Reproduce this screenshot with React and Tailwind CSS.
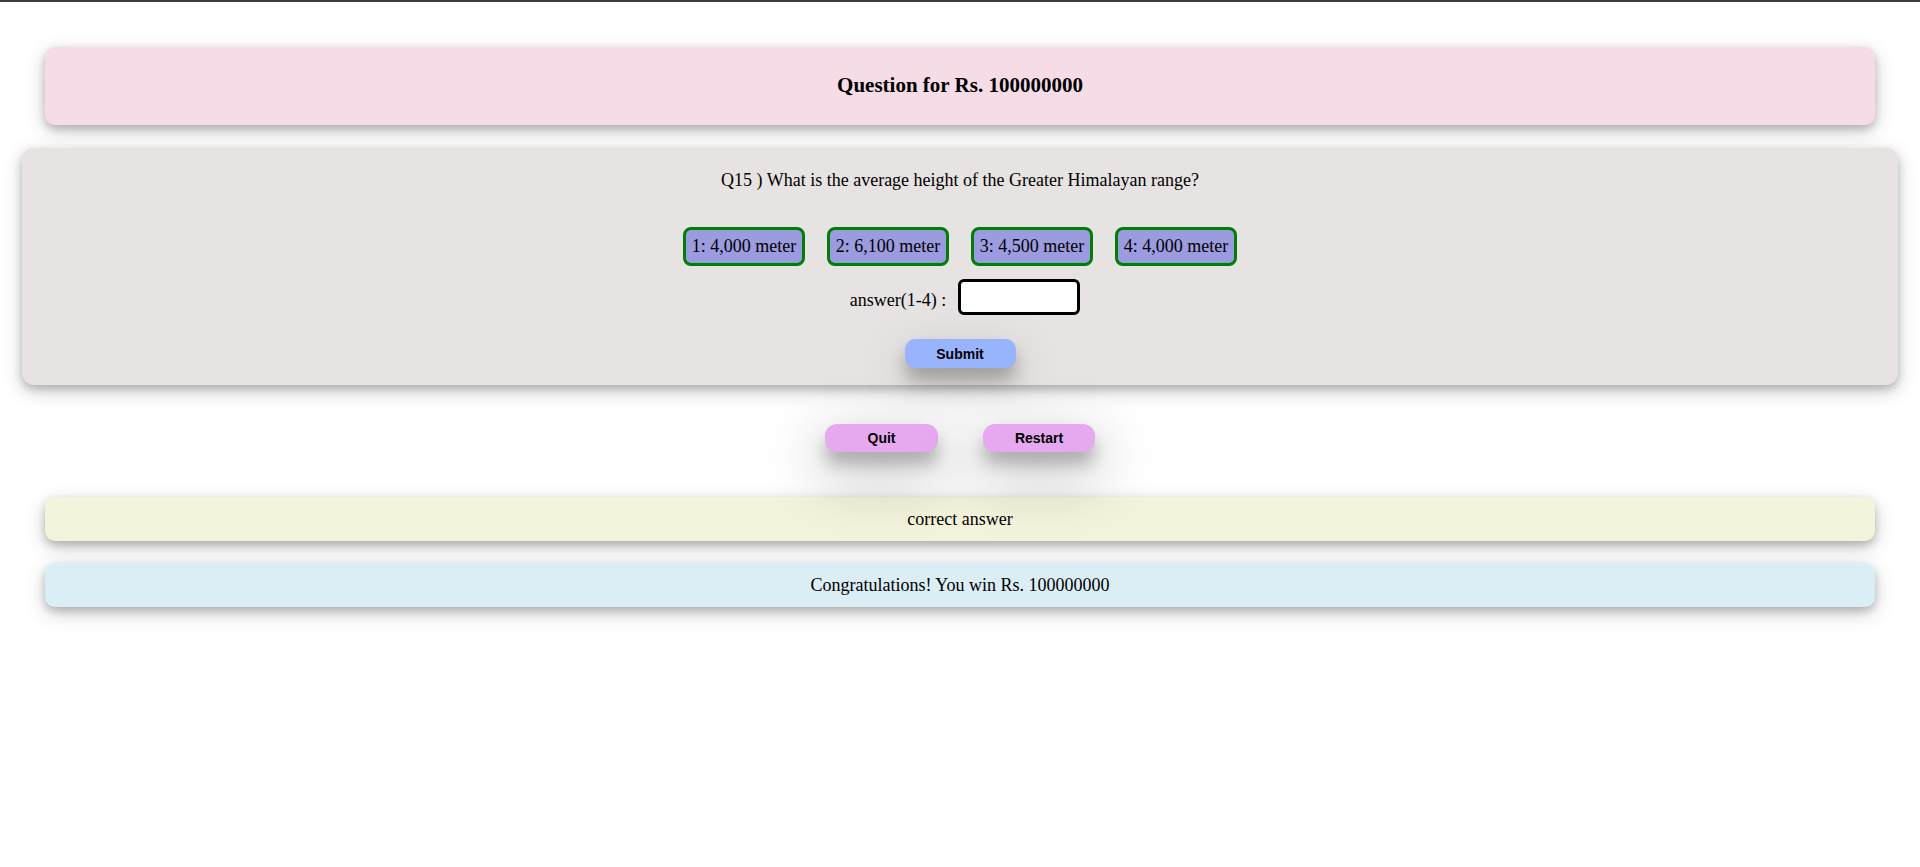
import React from "react";

const options = ["1: 4,000 meter", "2: 6,100 meter", "3: 4,500 meter", "4: 4,000 meter"];

const serif = "font-['Liberation_Serif','Times_New_Roman',serif]";
const sans = "font-['Liberation_Sans',Arial,sans-serif]";
const boxShadow = "shadow-[0_4px_8px_0_rgba(0,0,0,0.2),0_6px_20px_0_rgba(0,0,0,0.19)]";
const submitShadow = "shadow-[0_12px_16px_0_rgba(0,0,0,0.24),0_17px_50px_0_rgba(0,0,0,0.19)]";
const btnShadow = "shadow-[0_12px_16px_0_rgba(0,0,0,0.24),0_20px_60px_10px_rgba(0,0,0,0.2)]";

export default function App() {
  return (
    <div className={`min-h-screen w-full bg-white text-black ${serif}`}>
      <div className="h-[2px] w-full bg-[#3c3c3c]" />

      <div className={`mx-[45px] mt-[45px] h-[78px] rounded-[10px] bg-[#f5dce6] flex items-center justify-center ${boxShadow}`}>
        <h3 className="text-[21px] font-bold">Question for Rs. 100000000</h3>
      </div>

      <div className={`mx-[22px] mt-[23px] rounded-[12px] bg-[#e7e3e2] pt-[22px] pb-[17px] flex flex-col items-center ${boxShadow}`}>
        <p className="text-[18px] leading-[20px]">
          Q15 ) What is the average height of the Greater Himalayan range?
        </p>

        <div className="mt-[37px] flex gap-[22px]">
          {options.map((opt) => (
            <div
              key={opt}
              className="h-[39px] w-[122px] rounded-[8px] border-[3px] border-[#008000] bg-[#9b9be0] flex items-center justify-center text-[18px]"
            >
              {opt}
            </div>
          ))}
        </div>

        <div className="mt-[13px] pl-[10px] flex items-center gap-[12px]">
          <label className="text-[18px] pt-[6px]">answer(1-4) :</label>
          <input
            type="text"
            className="relative z-10 h-[36px] w-[122px] rounded-[6px] border-[3px] border-black bg-white outline-none"
          />
        </div>

        <button
          type="button"
          className={`mt-[24px] h-[29px] w-[111px] rounded-[10px] bg-[#99b4ff] pt-[1px] text-[14px] font-bold ${sans} ${submitShadow}`}
        >
          Submit
        </button>
      </div>

      <div className="mt-[39px] flex justify-center gap-[45px]">
        <button
          type="button"
          className={`h-[28px] w-[113px] rounded-[12px] bg-[#e6a8ee] text-[14px] font-bold ${sans} ${btnShadow}`}
        >
          Quit
        </button>
        <button
          type="button"
          className={`h-[28px] w-[112px] rounded-[12px] bg-[#e6a8ee] text-[14px] font-bold ${sans} ${btnShadow}`}
        >
          Restart
        </button>
      </div>

      <div className={`mx-[45px] mt-[45px] h-[44px] rounded-[10px] bg-[#f4f4dc] flex items-center justify-center text-[18px] ${boxShadow}`}>
        correct answer
      </div>

      <div className={`mx-[45px] mt-[22px] h-[44px] rounded-[10px] bg-[#dbedf5] flex items-center justify-center text-[18px] ${boxShadow}`}>
        Congratulations! You win Rs. 100000000
      </div>
    </div>
  );
}
